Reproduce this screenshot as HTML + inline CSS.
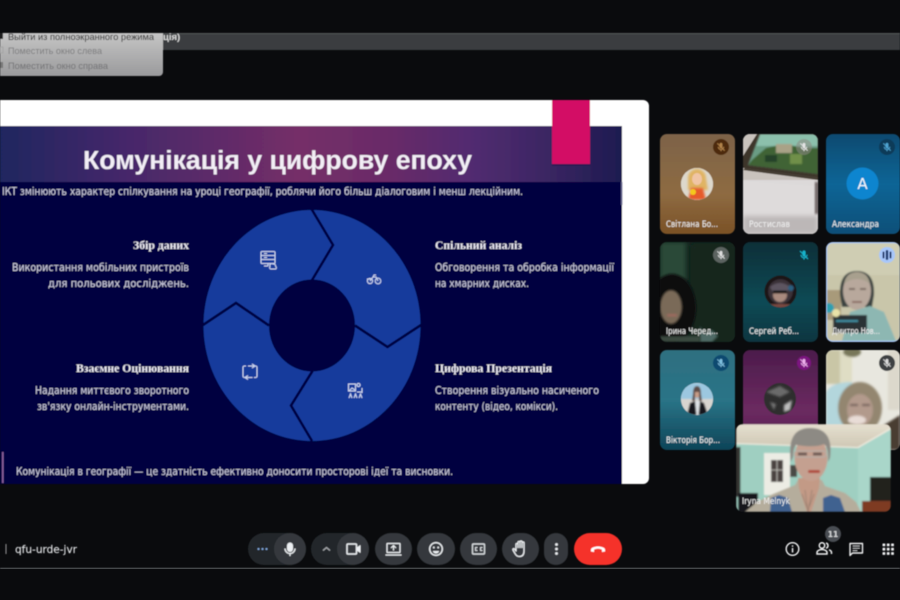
<!DOCTYPE html>
<html lang="uk"><head><meta charset="utf-8"><title>Meet</title>
<style>
html,body{margin:0;padding:0;background:#0a0b0d;width:900px;height:600px;overflow:hidden}
svg{display:block}
.s{font-family:"DejaVu Sans",sans-serif}
.l{font-family:"Liberation Sans",sans-serif}
.h{font-family:"Liberation Serif",serif;font-weight:bold;font-size:12px;fill:#ecebf2}
.b{font-family:"DejaVu Sans",sans-serif;font-size:10.5px;fill:#cfcfe0;stroke:#cfcfe0;stroke-width:.04}
.n{font-family:"DejaVu Sans",sans-serif;font-size:9px;fill:#ececec;stroke:#ececec;stroke-width:.1}
</style></head><body>
<svg width="900" height="600" viewBox="0 0 900 600" xmlns="http://www.w3.org/2000/svg">
<defs>
<filter id="b1" x="-30%" y="-30%" width="160%" height="160%"><feGaussianBlur stdDeviation="1"/></filter>
<filter id="b2" x="-30%" y="-30%" width="160%" height="160%"><feGaussianBlur stdDeviation="2.5"/></filter>
<filter id="b06" x="-5%" y="-5%" width="110%" height="110%"><feGaussianBlur stdDeviation=".7"/></filter>
<filter id="soft" x="0" y="0" width="100%" height="100%"><feGaussianBlur stdDeviation="0.4"/></filter>
<linearGradient id="hd" x1="0" x2="1" y1="0" y2="0">
<stop offset="0" stop-color="#1f2560"/><stop offset=".2" stop-color="#45286a"/><stop offset=".48" stop-color="#752e68"/><stop offset=".62" stop-color="#6a2c68"/><stop offset=".76" stop-color="#512b70"/><stop offset=".87" stop-color="#3d2764"/><stop offset="1" stop-color="#1d1b50"/>
</linearGradient>
<linearGradient id="t1" x1="0" x2="0" y1="0" y2="1"><stop offset="0" stop-color="#7d6348"/><stop offset=".6" stop-color="#8e6b42"/><stop offset="1" stop-color="#7a5126"/></linearGradient>
<linearGradient id="t3" x1="0" x2="0" y1="0" y2="1"><stop offset="0" stop-color="#0a4a70"/><stop offset=".5" stop-color="#0a6596"/><stop offset="1" stop-color="#0a4f78"/></linearGradient>
<linearGradient id="t5" x1="0" x2="0" y1="0" y2="1"><stop offset="0" stop-color="#0d2f38"/><stop offset=".6" stop-color="#114a55"/><stop offset="1" stop-color="#0d3540"/></linearGradient>
<linearGradient id="t7" x1="0" x2="0" y1="0" y2="1"><stop offset="0" stop-color="#2f6f80"/><stop offset=".5" stop-color="#2a7487"/><stop offset="1" stop-color="#0e4458"/></linearGradient>
<linearGradient id="t8" x1="0" x2="0" y1="0" y2="1"><stop offset="0" stop-color="#4c1c4c"/><stop offset=".6" stop-color="#6b2a60"/><stop offset="1" stop-color="#54204f"/></linearGradient>
<linearGradient id="menu" x1="0" x2="0" y1="0" y2="1"><stop offset="0" stop-color="#c5c5c5"/><stop offset="1" stop-color="#9a9a9c"/></linearGradient>
<linearGradient id="ceil" x1="0" x2="0" y1="0" y2="1"><stop offset="0" stop-color="#e6e0d0"/><stop offset="1" stop-color="#cfc7b4"/></linearGradient>
<clipPath id="c2"><rect x="743" y="134" width="75" height="100" rx="7"/></clipPath>
<clipPath id="c4"><rect x="660" y="242" width="75" height="100" rx="7"/></clipPath>
<clipPath id="c6"><rect x="827" y="243" width="73" height="98" rx="6"/></clipPath>
<clipPath id="c9"><rect x="826" y="350" width="74" height="100" rx="7"/></clipPath>
<clipPath id="cs"><rect x="736" y="424" width="155" height="88" rx="7"/></clipPath>
<clipPath id="av1"><circle cx="697" cy="184" r="16"/></clipPath>
<clipPath id="av5"><circle cx="780.500" cy="291.500" r="16"/></clipPath>
<clipPath id="av7"><circle cx="697" cy="399" r="16"/></clipPath>
<clipPath id="av8"><circle cx="780" cy="399" r="16"/></clipPath>
<symbol id="mic" viewBox="0 0 24 24"><path d="M12 3a3 3 0 0 0-3 3v6a3 3 0 0 0 6 0V6a3 3 0 0 0-3-3z" fill="currentColor"/><path d="M6 11.5a6 6 0 0 0 12 0M12 17.5V21" fill="none" stroke="currentColor" stroke-width="2"/><path d="M4 4l16 16" stroke="currentColor" stroke-width="2"/></symbol>
</defs>
<rect width="900" height="600" fill="#0a0b0d"/>
<g filter="url(#soft)">

<!-- top bar -->
<rect x="0" y="33" width="900" height="1" fill="#55585a"/>
<rect x="160" y="34" width="740" height="16" fill="#3a3e40"/>
<text x="163" y="40" class="l" font-size="9.5" font-weight="bold" fill="#d8d8d8">ція)</text>
<path d="M0 33H163V72a4 4 0 0 1-4 4H0z" fill="url(#menu)"/>
<rect x="0" y="33" width="3" height="6" fill="#222"/>
<rect x="0" y="47" width="3" height="6" fill="none" stroke="#a5a5a5"/>
<rect x="0" y="62" width="3" height="6" fill="#777"/>
<text x="8" y="40" class="l" font-size="9.2" fill="#1e1e1e" textLength="146" lengthAdjust="spacingAndGlyphs">Выйти из полноэкранного режима</text>
<text x="8" y="54" class="l" font-size="9.2" fill="#7b7b7d" textLength="94" lengthAdjust="spacingAndGlyphs">Поместить окно слева</text>
<text x="8" y="69" class="l" font-size="9.2" fill="#727274" textLength="100" lengthAdjust="spacingAndGlyphs">Поместить окно справа</text>

<!-- slide -->
<path d="M0 100H643a6 6 0 0 1 6 6V478a6 6 0 0 1-6 6H0z" fill="#ffffff"/>
<rect x="0" y="126" width="622" height="358" fill="#03033f"/>
<rect x="0" y="126" width="622" height="56" fill="url(#hd)"/>
<rect x="621" y="182" width="1.500" height="23" fill="#6d6d96"/>
<rect x="552" y="100" width="38" height="64" fill="#d30a65"/>
<rect x="552" y="164" width="38" height="2" fill="#2a1a50" opacity=".7"/>
<text x="83" y="169" class="l" font-size="25.500" font-weight="bold" fill="#f2eef5" textLength="389" lengthAdjust="spacingAndGlyphs">Комунікація у цифрову епоху</text>
<text x="2" y="195" class="b" textLength="521" lengthAdjust="spacingAndGlyphs">ІКТ змінюють характер спілкування на уроці географії, роблячи його більш діалоговим і менш лекційним.</text>

<!-- donut -->
<ellipse cx="312" cy="325.500" rx="108.500" ry="115.500" fill="#123a9c"/>
<ellipse cx="312" cy="325.500" rx="43" ry="46" fill="#03033f"/>
<g fill="none" stroke="#03033f" stroke-width="2.600" stroke-linejoin="miter">
<path d="M311.500 209L333 245 311.500 281"/>
<path d="M355 325.500L387.500 347 421 325"/>
<path d="M312.500 371L291 405.500 312 441"/>
<path d="M269 325.500L236 303 203 325"/>
</g>
<!-- donut icons -->
<g fill="none" stroke="#ccd5f0" stroke-width="1.100">
<rect x="261" y="251.500" width="14" height="12" rx="1"/><path d="M261 255.500h14M261 259.500h14M264 253.500h3M264 257.500h3"/>
<path d="M264 266h4M268 263v3"/>
<path d="M270 266.500a2 2 0 0 1 3-2.500 2.300 2.300 0 0 1 2.700 2.500 1.500 1.500 0 0 1 0 2.500h-5a1.500 1.500 0 0 1-.7-2.500z" fill="#123a9c"/>
<circle cx="370" cy="281" r="2.600"/><circle cx="378" cy="281" r="2.800"/><path d="M370 281l3-4h3l2 4M373 277l1-2h2M367 279h5"/>
<path d="M246 366h-1.500a1.500 1.500 0 0 0-1.500 1.500v8.500a1.500 1.500 0 0 0 1.500 1.500h8M248 366h7.500a1.500 1.500 0 0 1 1.500 1.500v8.500a1.500 1.500 0 0 1-1.500 1.500h-1.500M252 364l3 2-3 2M248 375.500l-3 2 3 2"/>
<rect x="348.500" y="384" width="7" height="7"/><circle cx="358.500" cy="385" r="1.600"/>
<path d="M357 392h5M362 388v5M349 398l1.500-4 1.500 4M354 398l1.500-4 1.500 4M359 398l1.500-4 1.500 4M349 391l3-3 3 2"/>
</g>

<!-- slide text -->
<text x="133" y="249" class="h" textLength="56" lengthAdjust="spacingAndGlyphs">Збір даних</text>
<text x="12" y="271" class="b" textLength="177" lengthAdjust="spacingAndGlyphs">Використання мобільних пристроїв</text>
<text x="48" y="287" class="b" textLength="141" lengthAdjust="spacingAndGlyphs">для польових досліджень.</text>
<text x="435" y="249" class="h" textLength="87" lengthAdjust="spacingAndGlyphs">Спільний аналіз</text>
<text x="435" y="271" class="b" textLength="179" lengthAdjust="spacingAndGlyphs">Обговорення та обробка інформації</text>
<text x="435" y="287" class="b" textLength="94" lengthAdjust="spacingAndGlyphs">на хмарних дисках.</text>
<text x="76" y="372" class="h" textLength="113" lengthAdjust="spacingAndGlyphs">Взаємне Оцінювання</text>
<text x="35" y="394" class="b" textLength="154" lengthAdjust="spacingAndGlyphs">Надання миттєвого зворотного</text>
<text x="37" y="410" class="b" textLength="152" lengthAdjust="spacingAndGlyphs">зв'язку онлайн-інструментами.</text>
<text x="435" y="372" class="h" textLength="117" lengthAdjust="spacingAndGlyphs">Цифрова Презентація</text>
<text x="435" y="394" class="b" textLength="164" lengthAdjust="spacingAndGlyphs">Створення візуально насиченого</text>
<text x="435" y="410" class="b" textLength="123" lengthAdjust="spacingAndGlyphs">контенту (відео, комікси).</text>
<rect x="2" y="452" width="1.600" height="31" fill="#8a5f9c"/>
<text x="16" y="475" class="b" textLength="437" lengthAdjust="spacingAndGlyphs">Комунікація в географії — це здатність ефективно доносити просторові ідеї та висновки.</text>

<!-- Tile 1 -->
<rect x="660" y="134" width="75" height="100" rx="7" fill="url(#t1)"/>
<circle cx="697" cy="184" r="16" fill="#e9e2d6"/>
<g clip-path="url(#av1)"><rect x="681" y="168" width="32" height="32" fill="#ddd8cc"/><path d="M688 178a9 9 0 0 1 18 0l2 12h-20z" fill="#e0b464" filter="url(#b1)"/><ellipse cx="697" cy="179" rx="5" ry="6" fill="#f0c5a5"/><path d="M688 200l3-12h12l3 12z" fill="#e65a2a" filter="url(#b1)"/><circle cx="693" cy="192" r="3" fill="#f4c81e"/></g>
<text x="666" y="227" class="n" textLength="52" lengthAdjust="spacingAndGlyphs">Світлана Бо...</text>
<circle cx="721" cy="147" r="8" fill="#4d2b0e"/>
<use href="#mic" x="715.500" y="141.500" width="11" height="11" color="#b4854c"/>

<!-- Tile 2 -->
<g clip-path="url(#c2)">
<rect x="743" y="134" width="75" height="100" fill="#dcd9d9"/>
<rect x="743" y="134" width="75" height="46" fill="#c9c3bd"/>
<path d="M757 134H818V178L743 168 743 156z" fill="#3e362c"/>
<g filter="url(#b06)">
<path d="M760 134H818V174L748 165z" fill="#6b9c84"/>
<path d="M760 134H818V146H756z" fill="#8cc0ac"/>
<path d="M752 160l14-12 18-4 20 4 14 0V174L748 165z" fill="#3f6434"/>
<rect x="776" y="144" width="16" height="9" fill="#a9a287"/>
<rect x="790" y="154" width="12" height="10" fill="#6f8f48"/>
<rect x="765" y="155" width="12" height="7" fill="#27422c"/>
</g>
<path d="M745 168l73 9v3l-75-10z" fill="#453c32"/>
<path d="M743 181L818 186V234H743z" fill="#dedbdb"/>
<rect x="743" y="216" width="75" height="18" fill="#bcb7b7" filter="url(#b2)"/>
<rect x="815" y="182" width="3" height="32" fill="#5c5050" filter="url(#b1)"/>
</g>
<text x="749" y="227" class="n" textLength="41" lengthAdjust="spacingAndGlyphs">Ростислав</text>
<circle cx="804" cy="147" r="8" fill="#8e8a84" opacity=".55"/>
<use href="#mic" x="798.500" y="141.500" width="11" height="11" color="#e4e4e4"/>

<!-- Tile 3 -->
<rect x="826" y="134" width="74" height="100" rx="7" fill="url(#t3)"/>
<circle cx="862.500" cy="183.500" r="16" fill="#0b85cf"/>
<text x="862.500" y="189" text-anchor="middle" class="s" font-size="15" fill="#f4f8fb">А</text>
<text x="832" y="227" class="n" textLength="47" lengthAdjust="spacingAndGlyphs">Александра</text>
<circle cx="887" cy="147" r="8" fill="#0b3a58"/>
<use href="#mic" x="881.500" y="141.500" width="11" height="11" color="#4fa6d4"/>

<!-- Tile 4 -->
<g clip-path="url(#c4)">
<rect x="660" y="242" width="75" height="100" fill="#14261f"/>
<rect x="660" y="242" width="26" height="38" fill="#2a4838" filter="url(#b2)"/>
<rect x="692" y="245" width="43" height="97" fill="#12281f" filter="url(#b2)"/>
<ellipse cx="672" cy="308" rx="24" ry="34" fill="#0c0b0c" filter="url(#b1)"/>
<ellipse cx="671" cy="307" rx="11" ry="17" fill="#7a6a58" filter="url(#b1)"/>
<rect x="667" y="314" width="10" height="2.500" fill="#a06a60" filter="url(#b1)"/>
<path d="M700 326l4 8 8-4 6 6-6 6h-12z" fill="#4f6a66" filter="url(#b1)"/>
<path d="M660 336h40v6h-40z" fill="#3a4a40" filter="url(#b1)"/>
</g>
<text x="666" y="334" class="n" textLength="52" lengthAdjust="spacingAndGlyphs">Ірина Черед...</text>
<circle cx="721" cy="255" r="8" fill="#6d7472" opacity=".8"/>
<use href="#mic" x="715.500" y="249.500" width="11" height="11" color="#e0e0e0"/>

<!-- Tile 5 -->
<rect x="743" y="242" width="75" height="100" rx="7" fill="url(#t5)"/>
<circle cx="780.500" cy="291.500" r="16" fill="#1a1416"/>
<g clip-path="url(#av5)" filter="url(#b06)">
<circle cx="780.500" cy="291.500" r="12.500" fill="#3a3238"/>
<ellipse cx="780" cy="295" rx="7" ry="7" fill="#a98a7e"/>
<path d="M770 287q10-8 20 0l-3 5h-14z" fill="#5d5560"/>
<rect x="773" y="290.500" width="14" height="3" fill="#111"/>
<circle cx="791" cy="288" r="3" fill="#2a5f80"/>
<path d="M770 304h20v4h-20z" fill="#7a4a40"/>
</g>
<text x="749" y="334" class="n" textLength="50" lengthAdjust="spacingAndGlyphs">Сергей Реб...</text>
<use href="#mic" x="798" y="249" width="12" height="12" color="#19b3cc"/>

<!-- Tile 6 -->
<rect x="826" y="242" width="74" height="100" rx="7" fill="#a8c7fa"/>
<g clip-path="url(#c6)">
<g filter="url(#b06)">
<rect x="827" y="243" width="73" height="98" fill="#c9c6aa"/>
<rect x="827" y="243" width="73" height="32" fill="#cfcdb3"/>
<rect x="827" y="290" width="14" height="30" fill="#a89a7a"/>
<path d="M840 295q-1-24 17-24t17 24l-2 12-30 0z" fill="#3a4240"/>
<ellipse cx="857" cy="291" rx="14" ry="19" fill="#b8a89c"/>
<path d="M844 284q2-12 13-12t13 12q-6-5-13-5t-13 5z" fill="#a8a08e"/>
<rect x="849" y="288" width="6" height="2" fill="#7a6a62"/><rect x="860" y="288" width="6" height="2" fill="#7a6a62"/>
<rect x="852" y="301" width="10" height="2" fill="#8c6e66"/>
<path d="M850 312l20-6 14 6 12 29h-54z" fill="#8db7b2"/>
<rect x="833" y="315" width="34" height="18" fill="#2a3236"/>
<rect x="836" y="320" width="22" height="2" fill="#3f8fa0"/>
<circle cx="829" cy="308" r="5" fill="#2f9fb0"/>
<circle cx="836" cy="313" r="4" fill="#e8e2a8"/>
</g>
</g>
<text x="832" y="334" class="n" textLength="48" lengthAdjust="spacingAndGlyphs">Дмитро Нов...</text>
<circle cx="887" cy="255" r="8" fill="#a8c7fa"/>
<g fill="#17356b"><rect x="882.500" y="251.500" width="2" height="7" rx="1"/><rect x="885.800" y="250" width="2.400" height="10" rx="1"/><rect x="889.500" y="251.500" width="2" height="7" rx="1"/></g>

<!-- Tile 7 -->
<rect x="660" y="350" width="75" height="100" rx="7" fill="url(#t7)"/>
<circle cx="697" cy="399" r="16" fill="#d8e4ea"/>
<g clip-path="url(#av7)" filter="url(#b06)">
<rect x="681" y="383" width="32" height="16" fill="#9cc7e0"/><rect x="681" y="399" width="32" height="16" fill="#d8d4cf"/>
<path d="M687 415l3-12 5-2h5l4 2 4 12z" fill="#16181c"/>
<path d="M695 401h5l-1.500 14h-2z" fill="#dfe3e6"/>
<ellipse cx="697" cy="393" rx="3.600" ry="5" fill="#c89d88"/>
<path d="M693 394q0-8 4-8t4 8l1 7h-3v-9h-4v9h-3z" fill="#5d4c46"/>
</g>
<text x="666" y="443" class="n" textLength="54" lengthAdjust="spacingAndGlyphs">Вікторія Бор...</text>
<circle cx="721" cy="363" r="8" fill="#0c4a70"/>
<use href="#mic" x="715.500" y="357.500" width="11" height="11" color="#7fc0e0"/>

<!-- Tile 8 -->
<rect x="743" y="350" width="75" height="100" rx="7" fill="url(#t8)"/>
<circle cx="780" cy="399" r="16" fill="#2e2e2e"/>
<g clip-path="url(#av8)" filter="url(#b1)"><path d="M766 392l14-6 10 6-10 5z" fill="#6a6a6a"/><path d="M784 405l8-5-2 10-6 2z" fill="#bdbdbd"/><path d="M770 402l6 2-2 6z" fill="#777"/></g>
<circle cx="804" cy="363" r="7" fill="#7c1580"/>
<use href="#mic" x="798.500" y="357.500" width="11" height="11" color="#f0b0ee"/>

<!-- Tile 9 -->
<g clip-path="url(#c9)">
<rect x="826" y="350" width="74" height="100" fill="#e8e7df"/>
<g filter="url(#b1)">
<rect x="826" y="350" width="14" height="34" fill="#c9c6a6"/>
<rect x="840" y="350" width="12" height="34" fill="#dfddc4"/>
<rect x="888" y="350" width="12" height="60" fill="#dcd8cc"/>
<ellipse cx="852" cy="352" rx="9" ry="5" fill="#78775a"/>
<path d="M826 392q6-10 26-10l4 46h-30z" fill="#b3d6dc"/>
<ellipse cx="860" cy="408" rx="22" ry="26" fill="#938670"/>
<ellipse cx="860" cy="410" rx="13" ry="16" fill="#b29a8c"/>
<rect x="850" y="404" width="8" height="2" fill="#6d5a55"/><rect x="862" y="404" width="8" height="2" fill="#6d5a55"/>
<ellipse cx="857" cy="420" rx="9" ry="4.500" fill="#e8dcd6"/>
<path d="M884 425l16-10v35h-14z" fill="#4a3c30"/>
</g>
</g>
<circle cx="887" cy="363" r="8" fill="#3c4042"/>
<use href="#mic" x="881.500" y="357.500" width="11" height="11" color="#dcdcdc"/>

<!-- Self view -->
<g clip-path="url(#cs)">
<g filter="url(#b06)">
<rect x="736" y="424" width="155" height="88" fill="#9fcfc1"/>
<path d="M858 447L891 428V512H858z" fill="#a9d6c9"/>
<path d="M736 424H891V428L858 447 736 443z" fill="url(#ceil)"/>
<path d="M736 443.500L858 447.500 891 428.500" fill="none" stroke="#f0ebdf" stroke-width="1.300"/>
<rect x="736" y="447" width="4.500" height="50" fill="#363632"/>
<rect x="764" y="453" width="26" height="42" fill="#ecece4"/>
<rect x="771" y="460" width="12" height="22" fill="#4a4240"/>
<path d="M777 460v22M771 470h12" stroke="#cfcfc8" stroke-width=".8"/>
<rect x="790" y="465" width="7" height="12" fill="#4a4a44"/>
<rect x="870" y="477" width="21" height="24" fill="#20241f"/>
<rect x="862" y="501" width="29" height="11" fill="#7e3a20"/>
<rect x="738" y="493" width="20" height="19" fill="#17181a"/>
<path d="M745 512l12-10 16-8 22-9 3-5h24l3 6 20 7 11 9 5 10z" fill="#b5ad9c"/>
<path d="M770 512l1-14 8-3 9 3 4 14zM823 512l0-14 8-3 9 3 5 14z" fill="#3f6290"/>
<path d="M798 478h22l-1 10-8 24h-4l-8-24z" fill="#c39a86"/>
<path d="M802 494l6 16 6-16M805 490l3 22 4-22" fill="none" stroke="#8f7a6c" stroke-width=".7"/>
<ellipse cx="811" cy="458" rx="16.500" ry="23" fill="#c4a090"/>
<path d="M791 462q-5-34 19-34t20 30l-2 4q1-14-4-18-8 4-28 1-3 4-3 12z" fill="#8d8a84"/>
<rect x="794" y="451" width="32" height="6" rx="2.500" fill="none" stroke="#b2b0aa" stroke-width="1"/>
<rect x="798" y="452.500" width="9" height="3" fill="#6d5a55"/>
<rect x="813" y="452.500" width="9" height="3" fill="#6d5a55"/>
<rect x="808" y="470" width="12" height="3" rx="1.500" fill="#b0483e"/>
</g>
</g>
<text x="742" y="504" class="n" textLength="48" lengthAdjust="spacingAndGlyphs">Iryna Melnyk</text>

<!-- Bottom bar -->
<rect x="0" y="568" width="900" height="1" fill="#717376"/>
<rect x="5.500" y="544" width="1" height="10" fill="#9a9a9a"/>
<text x="15" y="553" class="s" font-size="10.500" fill="#e0e2e4" stroke="#e0e2e4" stroke-width=".15" textLength="62" lengthAdjust="spacingAndGlyphs">qfu-urde-jvr</text>

<rect x="248" y="533" width="58" height="32" rx="16" fill="#24282b"/>
<circle cx="290" cy="549" r="16" fill="#35393c"/>
<g fill="#8ab0e8"><circle cx="258.500" cy="549" r="1"/><circle cx="262.500" cy="549" r="1"/><circle cx="266.500" cy="549" r="1"/></g>
<rect x="287" y="542.500" width="6" height="9.500" rx="3" fill="#eceff2"/>
<path d="M285 548.500a5 5 0 0 0 10 0M290 553.500v2.500" fill="none" stroke="#eceff2" stroke-width="1.300"/>

<rect x="311" y="533" width="58" height="32" rx="16" fill="#24282b"/>
<circle cx="353" cy="549" r="16" fill="#35393c"/>
<path d="M323 550.500l3.500-3 3.500 3" fill="none" stroke="#a8acb0" stroke-width="1.200"/>
<rect x="347" y="544" width="9.500" height="10" rx="1" fill="none" stroke="#eceff2" stroke-width="1.500"/>
<path d="M356.500 547.500l4-2.500v8l-4-2.500z" fill="#eceff2"/>

<rect x="375" y="533" width="37" height="32" rx="16" fill="#35393c"/>
<rect x="387" y="543.500" width="13" height="9" rx=".5" fill="none" stroke="#eceff2" stroke-width="1.300"/>
<path d="M385.500 555h16" stroke="#eceff2" stroke-width="1.300"/>
<path d="M393.500 545.500v5M391 548l2.500-2.500 2.500 2.500" fill="none" stroke="#eceff2" stroke-width="1.200"/>

<rect x="417" y="533" width="38" height="32" rx="16" fill="#35393c"/>
<circle cx="436" cy="549" r="6.300" fill="none" stroke="#eceff2" stroke-width="1.400"/>
<circle cx="433.800" cy="547.500" r="1" fill="#eceff2"/><circle cx="438.200" cy="547.500" r="1" fill="#eceff2"/>
<path d="M432.800 551h6.400a3.300 3.300 0 0 1-6.400 0z" fill="#eceff2"/>

<rect x="460" y="533" width="37" height="32" rx="16" fill="#35393c"/>
<rect x="472.500" y="544" width="12" height="10" rx="1" fill="none" stroke="#d8dcdf" stroke-width="1.400"/>
<path d="M477.500 547.500h-2v3h2M482.500 547.500h-2v3h2" fill="none" stroke="#d8dcdf" stroke-width="1"/>

<rect x="502" y="533" width="37" height="32" rx="16" fill="#35393c"/>
<path d="M516 551v-6.500a1 1 0 0 1 2 0v3-5a1 1 0 0 1 2 0v5-5.500a1 1 0 0 1 2 0v5.500-4.500a1 1 0 0 1 2 0v8c0 4-2 5.500-4.500 5.500s-3.500-1-4.500-3l-2-3.500c-.5-1 .8-1.800 1.500-1z" fill="none" stroke="#eceff2" stroke-width="1.300" stroke-linejoin="round"/>

<rect x="544" y="533" width="24" height="32" rx="12" fill="#35393c"/>
<g fill="#eceff2"><circle cx="556.500" cy="544.500" r="1.400"/><circle cx="556.500" cy="549" r="1.400"/><circle cx="556.500" cy="553.500" r="1.400"/></g>

<rect x="574" y="533" width="48" height="32" rx="16" fill="#f5332b"/>
<path d="M591 551.500v-2c0-1.800 3.500-3 7-3s7 1.200 7 3v2l-3 .5v-2.300c-1-.6-2.500-.9-4-.9s-3 .3-4 .9v2.300z" fill="#ffffff"/>

<!-- right icons -->
<circle cx="792.500" cy="549" r="6.300" fill="none" stroke="#f0f1f2" stroke-width="1.400"/>
<rect x="791.800" y="548" width="1.500" height="4.500" fill="#f0f1f2"/><rect x="791.800" y="545.300" width="1.500" height="1.500" fill="#f0f1f2"/>
<circle cx="833" cy="534" r="8" fill="#4a4e52"/>
<text x="833" y="537" text-anchor="middle" class="s" font-size="7.500" font-weight="bold" fill="#d4d6d8">11</text>
<circle cx="822" cy="545.500" r="2.700" fill="none" stroke="#f0f1f2" stroke-width="1.500"/>
<path d="M817 554v-1.500c0-2 3-3 5-3s5 1 5 3v1.500z" fill="none" stroke="#f0f1f2" stroke-width="1.500"/>
<path d="M826 543a2.700 2.700 0 0 1 0 5.200M829 549.800c1.500.5 2.500 1.300 2.500 2.700v1.500" fill="none" stroke="#f0f1f2" stroke-width="1.500"/>
<path d="M850 543.500h12.500v9.500h-10l-2.500 2.500z" fill="none" stroke="#f0f1f2" stroke-width="1.400" stroke-linejoin="round"/>
<path d="M852.500 546h7.500M852.500 548.300h7.500M852.500 550.600h5" stroke="#f0f1f2" stroke-width="1"/>
<g fill="#f0f1f2">
<rect x="882.500" y="543.500" width="2.800" height="2.800" rx=".6"/><rect x="886.800" y="543.500" width="2.800" height="2.800" rx=".6"/><rect x="891.100" y="543.500" width="2.800" height="2.800" rx=".6"/>
<rect x="882.500" y="547.800" width="2.800" height="2.800" rx=".6"/><rect x="886.800" y="547.800" width="2.800" height="2.800" rx=".6"/><rect x="891.100" y="547.800" width="2.800" height="2.800" rx=".6"/>
<rect x="882.500" y="552.100" width="2.800" height="2.800" rx=".6"/><rect x="886.800" y="552.100" width="2.800" height="2.800" rx=".6"/><rect x="891.100" y="552.100" width="2.800" height="2.800" rx=".6"/>
</g>
</g>
</svg>
</body></html>
